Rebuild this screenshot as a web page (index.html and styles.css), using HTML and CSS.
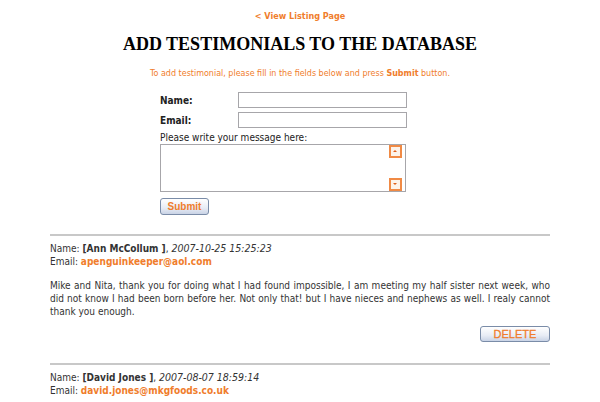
FILE: index.html
```html
<!DOCTYPE html>
<html lang="en">
<head>
  <meta charset="UTF-8">
  <title>Add Testimonials</title>
  <link rel="stylesheet" href="styles.css">
</head>
<body>
  <div class="container">
    <a class="back" href="#">&lt; View Listing Page</a>
    <h1>ADD TESTIMONIALS TO THE DATABASE</h1>
    <p class="intro">To add testimonial, please fill in the fields below and press <b>Submit</b> button.</p>

    <form class="form">
      <div class="row">
        <label for="name">Name:</label>
        <input type="text" id="name">
      </div>
      <div class="row">
        <label for="email">Email:</label>
        <input type="text" id="email">
      </div>
      <div class="msg-label">Please write your message here:</div>
      <div class="textarea">
        <textarea></textarea>
        <span class="arrow up"></span>
        <span class="arrow down"></span>
      </div>
      <button type="button" class="btn submit">Submit</button>
    </form>

    <div class="entry">
      <div>Name: <b>[Ann McCollum ]</b>, <i>2007-10-25 15:25:23</i></div>
      <div>Email: <a class="mail" href="#">apenguinkeeper@aol.com</a></div>
      <p class="text">Mike and Nita, thank you for doing what I had found impossible, I am meeting my half sister next week, who did not know I had been born before her. Not only that! but I have nieces and nephews as well. I realy cannot thank you enough.</p>
      <div class="actions"><button type="button" class="btn delete">DELETE</button></div>
    </div>

    <div class="entry">
      <div>Name: <b>[David Jones ]</b>, <i>2007-08-07 18:59:14</i></div>
      <div>Email: <a class="mail" href="#">david.jones@mkgfoods.co.uk</a></div>
    </div>
  </div>
</body>
</html>
```

FILE: styles.css
```css
body {
  margin: 0;
  font-family: "DejaVu Sans Condensed", "DejaVu Sans", Tahoma, sans-serif;
  font-stretch: semi-condensed;
  font-size: 10px;
  color: #333;
  background: #fff;
}
.container {
  width: 500px;
  margin: 0 auto;
  padding-top: 11px;
}
.back {
  display: block;
  text-align: center;
  color: #f07d2c;
  font-weight: bold;
  font-size: 9px;
  text-decoration: none;
}
h1 {
  font-family: "Liberation Serif", "Times New Roman", serif;
  font-size: 18px;
  color: #000;
  text-align: center;
  margin: 13px 0 14px;
}
.intro {
  text-align: center;
  color: #f07d2c;
  font-family: "DejaVu Sans", Verdana, sans-serif;
  font-stretch: normal;
  font-size: 8px;
  margin: 0 0 14px;
}
.form {
  width: 248px;
  margin-left: 110px;
}
.row {
  display: flex;
  align-items: center;
  margin-bottom: 4px;
}
.row label {
  width: 78px;
  font-weight: bold;
  color: #222;
}
.row input {
  width: 169px;
  height: 16px;
  box-sizing: border-box;
  border: 1px solid #a7a6aa;
  padding: 0;
}
.msg-label {
  color: #222;
  margin-top: 2px;
}
.textarea {
  position: relative;
  width: 246px;
  height: 48px;
  margin-top: 1px;
}
.textarea textarea {
  width: 100%;
  height: 100%;
  box-sizing: border-box;
  border: 1px solid #a7a6aa;
  resize: none;
  margin: 0;
  display: block;
}
.arrow {
  position: absolute;
  right: 4px;
  width: 13px;
  height: 13px;
  box-sizing: border-box;
  border: 2px solid #f08a45;
  background: #fdf3ea;
}
.arrow::after {
  content: "";
  position: absolute;
  left: 2px;
  border-left: 2.5px solid transparent;
  border-right: 2.5px solid transparent;
}
.arrow.up { top: 1px; }
.arrow.up::after { top: 3px; border-bottom: 2px solid #e0601a; }
.arrow.down { bottom: 1px; }
.arrow.down::after { top: 3px; border-top: 2px solid #e0601a; }
.btn {
  font-family: "Liberation Sans", Arial, sans-serif;
  color: #f07d2c;
  font-weight: bold;
  border: 1px solid #7a8ca8;
  border-radius: 3px;
  background: linear-gradient(#ffffff, #e8ecf5 60%, #c9d3e6);
  padding: 0;
  cursor: pointer;
}
.submit {
  width: 49px;
  height: 17px;
  font-size: 10px;
  margin-top: 6px;
}
.entry {
  border-top: 2px solid #c8c8c8;
  margin-top: 19px;
  padding-top: 6px;
  line-height: 13px;
}
.entry i {
  font-size: 10.5px;
}
.mail {
  color: #f07d2c;
  font-weight: bold;
  text-decoration: none;
}
.text {
  text-align: justify;
  margin: 11px 0 0;
}
.actions {
  display: flex;
  justify-content: flex-end;
  margin-top: 8px;
}
.delete {
  width: 70px;
  height: 16px;
  font-size: 11px;
  font-weight: normal;
  -webkit-text-stroke: 0.3px #f07d2c;
}
.entry + .entry {
  margin-top: 21px;
}
```
